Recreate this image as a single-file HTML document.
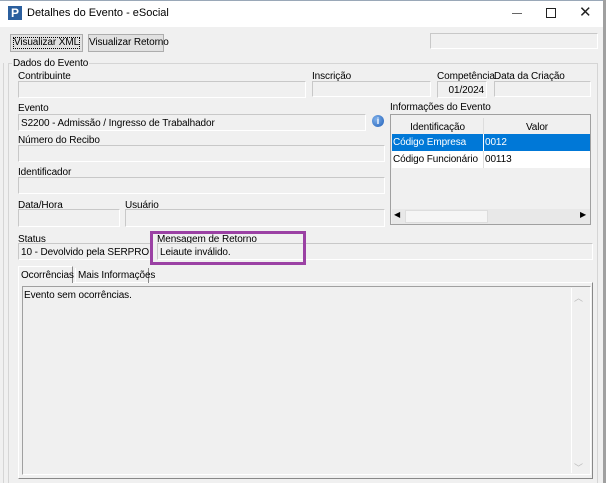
<!DOCTYPE html>
<html style="overflow:hidden;width:606px;height:483px"><head><style>
*{margin:0;padding:0;box-sizing:border-box}
body{width:606px;height:483px;background:#f0f0f0;font-family:"Liberation Sans",sans-serif;font-size:10px;color:#000;position:relative;overflow:hidden}
.a{position:absolute}
.f{position:absolute;border-top:1px solid #c8c8c8;border-left:1px solid #c8c8c8;border-right:1px solid #fff;border-bottom:1px solid #fff;background:#f0f0f0;padding:3px 2px 2px;white-space:nowrap;overflow:hidden;font-size:10px;letter-spacing:-0.1px}
.l{position:absolute;font-size:10px;white-space:nowrap;letter-spacing:-0.1px}
.btn{position:absolute;background:#e1e1e1;border:1px solid #adadad;font-size:10px;text-align:center;line-height:16px;white-space:nowrap;letter-spacing:-0.1px}
</style></head><body>
<div class="a" style="left:0;top:0;width:606px;height:27px;background:#fff;border-top:1px solid #9aa8b8"></div>
<div class="a" style="left:8px;top:6px;width:14px;height:14px;background:#2b5f9e;color:#fff;font-weight:bold;font-size:12px;line-height:14px;text-align:center">P</div>
<div class="a" style="left:27px;top:7px;font-size:11px">Detalhes do Evento - eSocial</div>
<div class="a" style="left:512px;top:13px;width:10px;height:1px;background:#666"></div>
<div class="a" style="left:546px;top:8px;width:10px;height:10px;border:1px solid #222"></div>
<div class="a" style="left:579px;top:3px;font-size:15px;color:#222">✕</div>
<div class="a" style="left:603px;top:0;width:3px;height:483px;background:#a0a0a0"></div>
<div class="btn" style="left:10px;top:34px;width:73px;height:18px;outline:1px dotted #000;outline-offset:-4px">Visualizar XML</div>
<div class="btn" style="left:88px;top:34px;width:76px;height:18px">Visualizar Retorno</div>
<div class="f" style="left:430px;top:33px;width:168px;height:16px"></div>
<div class="a" style="left:8px;top:63px;width:590px;height:420px;border:1px solid #d5d5d5;border-bottom:none"></div>
<div class="a" style="left:3px;top:63px;width:1px;height:420px;background:#d5d5d5"></div>
<div class="l" style="left:12px;top:58px;background:#f0f0f0;padding:0 1px">Dados do Evento</div>
<div class="l" style="left:18px;top:71px">Contribuinte</div>
<div class="f" style="left:18px;top:81px;width:288px;height:17px"></div>
<div class="l" style="left:312px;top:71px">Inscrição</div>
<div class="f" style="left:312px;top:81px;width:119px;height:16px"></div>
<div class="l" style="left:437px;top:71px">Competência</div>
<div class="f" style="left:437px;top:81px;width:50px;height:17px;text-align:right">01/2024</div>
<div class="l" style="left:494px;top:71px">Data da Criação</div>
<div class="f" style="left:494px;top:81px;width:97px;height:16px"></div>
<div class="l" style="left:18px;top:103px">Evento</div>
<div class="f" style="left:18px;top:114px;width:348px;height:17px">S2200 - Admissão / Ingresso de Trabalhador</div>
<div class="a" style="left:372px;top:115px;width:12px;height:12px;border-radius:50%;background:radial-gradient(circle at 35% 35%,#7fb0ea,#1f5fb8);color:#fff;font-size:9px;font-weight:bold;text-align:center;line-height:12px">i</div>
<div class="l" style="left:390px;top:102px">Informações do Evento</div>
<div class="a" style="left:390px;top:114px;width:201px;height:111px;border:1px solid #a0a0a0;background:#f0f0f0"></div>
<div class="l" style="left:392px;top:122px;width:91px;text-align:center">Identificação</div>
<div class="l" style="left:484px;top:122px;width:106px;text-align:center">Valor</div>
<div class="a" style="left:483px;top:118px;width:1px;height:50px;background:#ddd"></div>
<div class="a" style="left:392px;top:134px;width:198px;height:17px;background:#0078d7"></div>
<div class="l" style="left:393px;top:137px;color:#fff">Código Empresa</div>
<div class="l" style="left:485px;top:137px;color:#fff">0012</div>
<div class="a" style="left:483px;top:134px;width:1px;height:17px;background:#fff"></div>
<div class="a" style="left:392px;top:151px;width:198px;height:17px;background:#fff"></div>
<div class="a" style="left:483px;top:151px;width:1px;height:17px;background:#ddd"></div>
<div class="l" style="left:393px;top:154px">Código Funcionário</div>
<div class="l" style="left:485px;top:154px">00113</div>
<div class="a" style="left:392px;top:209px;width:198px;height:15px;background:#e8e8e8"></div>
<div class="a" style="left:405px;top:210px;width:83px;height:13px;background:#f5f5f5;border:1px solid #ddd"></div>
<div class="l" style="left:394px;top:210px;font-size:8px">◀</div>
<div class="l" style="left:580px;top:210px;font-size:8px">▶</div>
<div class="l" style="left:18px;top:135px">Número do Recibo</div>
<div class="f" style="left:18px;top:145px;width:367px;height:17px"></div>
<div class="l" style="left:18px;top:167px">Identificador</div>
<div class="f" style="left:18px;top:177px;width:367px;height:17px"></div>
<div class="l" style="left:18px;top:200px">Data/Hora</div>
<div class="f" style="left:18px;top:209px;width:102px;height:18px"></div>
<div class="l" style="left:125px;top:200px">Usuário</div>
<div class="f" style="left:125px;top:209px;width:260px;height:18px"></div>
<div class="l" style="left:18px;top:234px">Status</div>
<div class="f" style="left:18px;top:243px;width:133px;height:17px">10 - Devolvido pela SERPRO</div>
<div class="l" style="left:157px;top:234px">Mensagem de Retorno</div>
<div class="f" style="left:157px;top:243px;width:436px;height:17px">Leiaute inválido.</div>
<div class="a" style="left:150px;top:231px;width:156px;height:34px;border:3px solid #9b41a4"></div>
<div class="a" style="left:18px;top:282px;width:575px;height:197px;border:1px solid #fff;border-right:1px solid #888;border-bottom:1px solid #888"></div>
<div class="a" style="left:18px;top:266px;width:55px;height:17px;background:#f0f0f0;border:1px solid #fff;border-bottom:none;border-right:1px solid #888"></div>
<div class="l" style="left:21px;top:270px">Ocorrências</div>
<div class="a" style="left:75px;top:268px;width:74px;height:15px;border-left:1px solid #fff;border-right:1px solid #888"></div>
<div class="l" style="left:78px;top:270px">Mais Informações</div>
<div class="a" style="left:22px;top:286px;width:569px;height:189px;border:1px solid #a0a0a0;border-right-color:#fff;border-bottom-color:#fff"></div>
<div class="l" style="left:24px;top:290px">Evento sem ocorrências.</div>
<div class="a" style="left:571px;top:288px;width:15px;height:185px;border-left:1px solid #fff"></div>
<div class="l" style="left:574px;top:291px;font-size:9px;color:#bbb">︿</div>
<div class="l" style="left:574px;top:461px;font-size:9px;color:#bbb">﹀</div>
</body></html>
